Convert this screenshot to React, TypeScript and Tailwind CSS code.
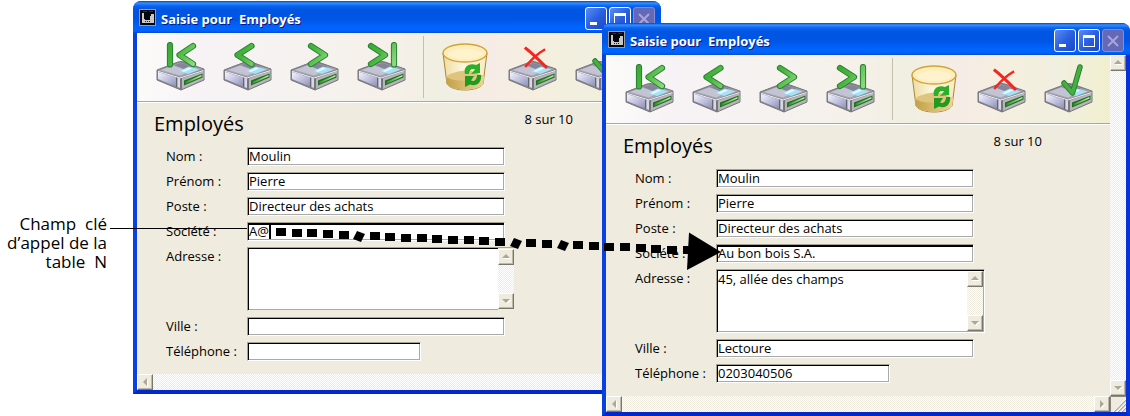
import React, { useId } from "react";

type Glyph = "first" | "previous" | "next" | "last" | "delete" | "cancel" | "validate";

const strokes: Record<string, string[]> = {
  first: ["M14 3V22.5", "M37 4L23.500 13L37 22"],
  previous: ["M28.500 4L14.500 13L28.500 22"],
  next: ["M21 4L35 13L21 22"],
  last: ["M14 4L28 13L14 22", "M37 3V22.5"],
  validate: ["M20 19L28.5 29L36 3"],
};

function Drive() {
  const id = useId();
  return (
    <>
      <defs>
        <linearGradient id={`${id}l`} x1="0" y1="0" x2="1" y2="1">
          <stop offset="0" stopColor="#f4f4fc" />
          <stop offset="0.6" stopColor="#b9b9dc" />
          <stop offset="1" stopColor="#8f8fae" />
        </linearGradient>
        <linearGradient id={`${id}s`} x1="0" y1="1" x2="1" y2="0">
          <stop offset="0" stopColor="#1f8f1c" />
          <stop offset="1" stopColor="#d4f7b8" />
        </linearGradient>
      </defs>
      <path d="M1 28L22 20Q25 19 28 20L48 27V38L25 48L1 38Z" fill="#86868c" stroke="#77777c" strokeLinejoin="round" />
      <path d="M2 28.5L24 20.5L47 27L25 35Z" fill="#a4a4b4" />
      <path d="M5 28L17 23.5L34 29L24 33.5Z" fill="#c3c3d4" />
      <path d="M18 23L25 21L37 24.5L30 28Z" fill="#85859a" />
      <path d="M23 29L33 24.500L43.500 27.5L32 32Z" fill="#a5e2f5" />
      <path d="M25.500 29L33 25.500L36 26.500L28 30Z" fill="#e3faff" />
      <path d="M2 30L20 35.500V44.500L2 37Z" fill={`url(#${id}l)`} />
      <path d="M21.500 36L24 36.500V46L21.500 45Z" fill="#d8d8ec" />
      <path d="M26 36.5L47.5 29V37.5L26 47Z" fill="#b5b5ba" />
      <path d="M20.500 35V45M25 36V47.5" stroke="#66666c" />
      <path d="M28 38.5L46.500 31.500V35.500L28 43.5Z" fill="#236f25" />
      <path d="M29.5 39.8L45.500 33V34.500L29.5 42Z" fill={`url(#${id}s)`} />
      <path d="M2 29.3L24 36L47.5 28.5" fill="none" stroke="#ececf4" />
    </>
  );
}

function ToolIcon({ glyph }: { glyph: Glyph }) {
  const id = useId();
  if (glyph === "delete") {
    return (
      <svg viewBox="0 0 49 50" className="block h-[50px] w-[49px]" aria-hidden="true">
        <defs>
          <linearGradient id={`${id}b`} x1="0" x2="1" y1="0" y2="0">
            <stop offset="0" stopColor="#efdca0" />
            <stop offset="0.45" stopColor="#fbf5dc" />
            <stop offset="1" stopColor="#f6ebc4" />
          </linearGradient>
          <linearGradient id={`${id}c`} x1="0" x2="1" y1="0" y2="0">
            <stop offset="0" stopColor="#c4a148" />
            <stop offset="1" stopColor="#ecd596" />
          </linearGradient>
        </defs>
        <path d="M2 11L6 42C9 46 16 48 24 48S39 46 42 42L46 11Z" fill={`url(#${id}b)`} stroke="#a98638" />
        <path d="M5 35C9 31 17 29 28 28L43 34L42 42C39 46 32 47.5 24 47.5S9 46 6 42Z" fill="#dfc47e" />
        <path d="M5 35C13 40 33 40 43 34L42 42C39 46 32 47.5 24 47.5S9 46 6 42Z" fill={`url(#${id}c)`} />
        <ellipse cx="24" cy="11" rx="22" ry="9" fill="#fcedbd" stroke="#d2a436" strokeWidth="1.4" />
        <path d="M6 12C12 6 35 5 42 12C35 19 13 19 6 12Z" fill="#fff6d6" opacity="0.6" />
        <path d="M24 32C22 25 28 20.500 35 23L39 21V31L30 32L34 27.500C31 26 28 28 28 32Z" fill="#2fae27" />
        <path d="M40 33C41 41 35 45 29 42.500L24 45V34L33 34L30 38.500C33 40 36 38 36 33Z" fill="#219a1f" />
      </svg>
    );
  }
  return (
    <svg viewBox="0 0 49 50" className="block h-[50px] w-[49px]" aria-hidden="true">
      <defs>
        <linearGradient id={`${id}g`} x1="0" y1="0" x2="40" y2="26" gradientUnits="userSpaceOnUse">
          <stop offset="0" stopColor="#2c9d2c" />
          <stop offset="0.5" stopColor="#45b53a" />
          <stop offset="1" stopColor="#9be28c" />
        </linearGradient>
      </defs>
      <Drive />
      {glyph === "cancel" ? (
        <g fill="none" stroke="#f5261f" strokeLinecap="square">
          <path d="M18 6.500C24 11 31 18 38 25" strokeWidth="3" />
          <path d="M36 8C29 12 23 18 18 24" strokeWidth="2.500" />
        </g>
      ) : (
        strokes[glyph].map((d) => (
          <g key={d} fill="none" strokeLinecap="round" strokeLinejoin="round">
            <path d={d} stroke="#2b7f36" strokeWidth={glyph === "validate" ? 5.5 : 6.2} />
            <path d={d} stroke={glyph === "validate" ? "#45b040" : `url(#${id}g)`} strokeWidth={glyph === "validate" ? 3.5 : 4.2} />
          </g>
        ))
      )}
    </svg>
  );
}

function ToolButton({ glyph, label }: { glyph: Glyph; label: string }) {
  return (
    <button type="button" aria-label={label} className="shrink-0">
      <ToolIcon glyph={glyph} />
    </button>
  );
}

const arrows = {
  up: "M4 9L8 5L12 9Z",
  down: "M4 6H12L8 10Z",
  left: "M10 4V12L6 8Z",
  right: "M6 4V12L10 8Z",
};

function ScrollButton({ direction, label }: { direction: keyof typeof arrows; label: string }) {
  return (
    <button
      type="button"
      aria-label={label}
      className="size-4 shrink-0 border-t border-l border-r border-b border-t-white border-l-white border-r-[#7b7768] border-b-[#7b7768] bg-[#efebde] shadow-[inset_-1px_-1px_0_#bdb9a9]"
    >
      <svg viewBox="1 1 14 14" className="block size-[14px]" aria-hidden="true">
        <path d={arrows[direction]} fill="#fff" transform="translate(1 1)" />
        <path d={arrows[direction]} fill="#aca899" />
      </svg>
    </button>
  );
}

const track = "bg-[repeating-conic-gradient(#ffffff_0_25%,#efebde_0_50%)] bg-[length:2px_2px]";

function Field({
  label,
  value,
  width = "w-[258px]",
  active = false,
  caret = false,
}: {
  label: string;
  value: string;
  width?: string;
  active?: boolean;
  caret?: boolean;
}) {
  const id = useId();
  const bevel = active
    ? "shadow-[inset_1px_2px_0_#000,inset_-1px_-1px_0_#a9a9ad]"
    : "shadow-[inset_1px_1px_0_#000,inset_-1px_-1px_0_#a9a9ad]";
  return (
    <>
      <label htmlFor={id} className="leading-[19px] whitespace-nowrap">{label}</label>
      <div className="relative">
        <input
          id={id}
          defaultValue={value}
          className={`block h-[19px] border border-t-[#a5a294] border-l-[#a5a294] border-r-white border-b-white bg-white pr-1 pb-[2px] pl-px leading-[15px] outline-none ${width} ${bevel}`}
        />
        {caret && <span className="absolute top-[2px] left-[22px] h-[15px] w-[2px] bg-black" />}
      </div>
    </>
  );
}

function AddressField({ value, framed }: { value: string; framed: boolean }) {
  const id = useId();
  return (
    <>
      <label htmlFor={id} className="leading-[19px]">Adresse :</label>
      <div
        className={`flex h-16 w-[269px] border border-t-[#a5a294] border-l-[#a5a294] ${
          framed
            ? "border-r-white border-b-white bg-white shadow-[inset_1px_1px_0_#000,inset_-1px_-1px_0_#a9a9ad]"
            : "border-transparent"
        }`}
      >
        <textarea
          id={id}
          defaultValue={value}
          className={`min-w-0 flex-1 resize-none overflow-hidden pt-px pl-px leading-4 outline-none ${
            framed ? "bg-transparent" : "bg-white shadow-[inset_1px_1px_0_#000,inset_0_-1px_0_#a9a9ad]"
          }`}
        />
        <div className={`my-px mr-px flex w-4 flex-col justify-between ${track}`}>
          <ScrollButton direction="up" label="Défiler vers le haut" />
          <ScrollButton direction="down" label="Défiler vers le bas" />
        </div>
      </div>
    </>
  );
}

function TitleBar() {
  const control =
    "flex h-[23px] w-[22px] items-center justify-center rounded-[3px] border border-white bg-linear-to-br from-[#5c8cf0] via-[#2a5fe0] to-[#1a48c8]";
  return (
    <header className="flex h-8 items-center rounded-t-lg bg-[linear-gradient(180deg,#0842c0_0,#3390ff_2px,#0a62ee_5px,#0055e2_9px,#0055e5_18px,#0066ff_27px,#0062f8_30px,#0048d0_32px)] pr-[6px] pl-[6px]">
      <svg viewBox="0 0 17 17" className="mr-[5px] size-[17px] shrink-0" aria-hidden="true">
        <rect width="17" height="17" fill="#9a9a9a" />
        <rect x="1" y="1" width="15" height="15" fill="#050510" />
        <path d="M3 4H5V10H6V11H11V7H12V5H15V14H3Z" fill="#c8c8c8" />
        <path d="M4 2.500H8M10 2.500H14" stroke="#2020a8" />
        <path d="M6 12.500H7M8 12.500H9M10 12.500H11" stroke="#222" />
      </svg>
      <h1 className="flex-1 pt-[3px] text-[13px] leading-5 font-bold whitespace-pre text-white [text-shadow:1px_1px_0_#0a1883]">
        {"Saisie pour  Employés"}
      </h1>
      <div className="flex gap-[2px] pt-[2px]">
        <button type="button" aria-label="Réduire" className={control}>
          <svg viewBox="0 0 20 21" className="h-[21px] w-5"><path d="M4 14H11V17H4Z" fill="#fff" /></svg>
        </button>
        <button type="button" aria-label="Agrandir" className={control}>
          <svg viewBox="0 0 20 21" className="h-[21px] w-5"><path d="M4 5H16V17H4ZM5 8V16H15V8Z" fill="#fff" fillRule="evenodd" /></svg>
        </button>
        <button
          type="button"
          disabled
          aria-label="Fermer"
          className="flex h-[23px] w-[22px] items-center justify-center rounded-[3px] border border-[#8a8ccc] bg-[#6468b8]"
        >
          <svg viewBox="0 0 20 21" className="h-[21px] w-5"><path d="M5 6L15 16M15 6L5 16" stroke="#a9a6d6" strokeWidth="2" /></svg>
        </button>
      </div>
    </header>
  );
}

interface Employee {
  company: string;
  address: string;
  city: string;
  phone: string;
}

function EntryWindow({ record, place, editing = false }: { record: Employee; place: string; editing?: boolean }) {
  return (
    <section className={`absolute w-[528px] overflow-hidden rounded-t-lg bg-[#0a46e8] ${place}`}>
      <TitleBar />
      <div className="border-x-4 border-b-4 border-t-0 border-l-[#0a3fe0] border-r-[#0831d9] border-b-[#0228cc] bg-[#efebde]">
        <div className="flex">
          <div className="min-w-0 flex-1">
            <nav className="flex h-[69px] items-center border-b border-[#aca899] bg-[linear-gradient(90deg,#fbfbf9_0,#f7f2f5_14%,#f6f2f0_32%,#f5f0e8_52%,#f0efe2_60%,#f6ece6_70%,#f5efdf_80%,#f1efdf_90%,#f2efcf_100%)] pl-[19px] shadow-[0_1px_0_#fff]">
              <div className="flex gap-[18px]">
                <ToolButton glyph="first" label="Premier enregistrement" />
                <ToolButton glyph="previous" label="Enregistrement précédent" />
                <ToolButton glyph="next" label="Enregistrement suivant" />
                <ToolButton glyph="last" label="Dernier enregistrement" />
              </div>
              <div className="mx-[17px] h-[62px] w-px shrink-0 bg-[#c5c0ad]" />
              <div className="flex gap-[18px]">
                <ToolButton glyph="delete" label="Supprimer" />
                <ToolButton glyph="cancel" label="Annuler" />
                <ToolButton glyph="validate" label="Valider" />
              </div>
            </nav>
            <form className="pb-[13px]" onSubmit={(event) => event.preventDefault()}>
              <div className="flex items-start justify-between pt-2 pr-[68px] pl-[17px]">
                <h2 className="pt-[2px] pb-[2px] text-[20px] leading-6">Employés</h2>
                <p className="leading-[18px]">8 sur 10</p>
              </div>
              <div className="mt-[9px] grid grid-cols-[81px_1fr] gap-y-[6px] pl-[29px]">
                <Field label="Nom :" value="Moulin" />
                <Field label="Prénom :" value="Pierre" />
                <Field label="Poste :" value="Directeur des achats" />
                <Field label="Société :" value={record.company} active caret={editing} />
                <AddressField value={record.address} framed={!editing} />
                <Field label="Ville :" value={record.city} />
                <Field label="Téléphone :" value={record.phone} width="w-[174px]" />
              </div>
            </form>
          </div>
          <div className={`flex w-4 flex-col justify-between ${track}`}>
            <ScrollButton direction="up" label="Monter" />
            <ScrollButton direction="down" label="Descendre" />
          </div>
        </div>
        <div className="flex">
          <div className={`flex flex-1 justify-between ${track}`}>
            <ScrollButton direction="left" label="Vers la gauche" />
            <ScrollButton direction="right" label="Vers la droite" />
          </div>
          <svg viewBox="0 0 16 16" className="size-4 bg-[#efebde]" aria-hidden="true">
            <path d="M0.500 16V0.500H16" fill="none" stroke="#8b8778" />
            <path d="M4 16L16 4M8 16L16 8M12 16L16 12" stroke="#aca899" strokeWidth="1.500" />
            <path d="M3 16L16 3M7 16L16 7M11 16L16 11" stroke="#fff" strokeWidth="0.800" />
          </svg>
        </div>
      </div>
    </section>
  );
}

const turned = [5, 15, 18];

function LinkArrow() {
  return (
    <svg viewBox="0 0 730 280" className="pointer-events-none absolute top-0 left-0 h-[280px] w-[730px]" aria-hidden="true">
      <path d="M110 228.500H247" stroke="#000" />
      {Array.from({ length: 27 }, (_, i) => {
        const x = Math.round(276 + i * 15.64);
        const y = Math.round(228 + i * 0.7);
        return turned.includes(i) ? (
          <path key={i} d={`M${x - 1} ${y + 7}L${x + 3} ${y - 1}L${x + 11} ${y + 2}L${x + 7} ${y + 10}Z`} />
        ) : (
          <path key={i} d={`M${x} ${y}H${x + 10}V${y + 8}H${x}Z`} />
        );
      })}
      <path d="M689 232.500L721 252L687 270Z" />
    </svg>
  );
}

export default function App() {
  return (
    <main className="relative min-h-screen w-full overflow-hidden bg-white font-['Open_Sans','Noto_Sans',sans-serif] text-[13px] text-black">
      <p className="absolute top-[214px] left-0 w-[107px] text-right text-[17px] leading-[19px] whitespace-pre">
        {"Champ  clé\nd’appel de la\ntable  N"}
      </p>
      <EntryWindow place="left-[133px] top-px" editing record={{ company: "A@", address: "", city: "", phone: "" }} />
      <EntryWindow
        place="left-[602px] top-[23px]"
        record={{ company: "Au bon bois S.A.", address: "45, allée des champs", city: "Lectoure", phone: "0203040506" }}
      />
      <LinkArrow />
    </main>
  );
}
